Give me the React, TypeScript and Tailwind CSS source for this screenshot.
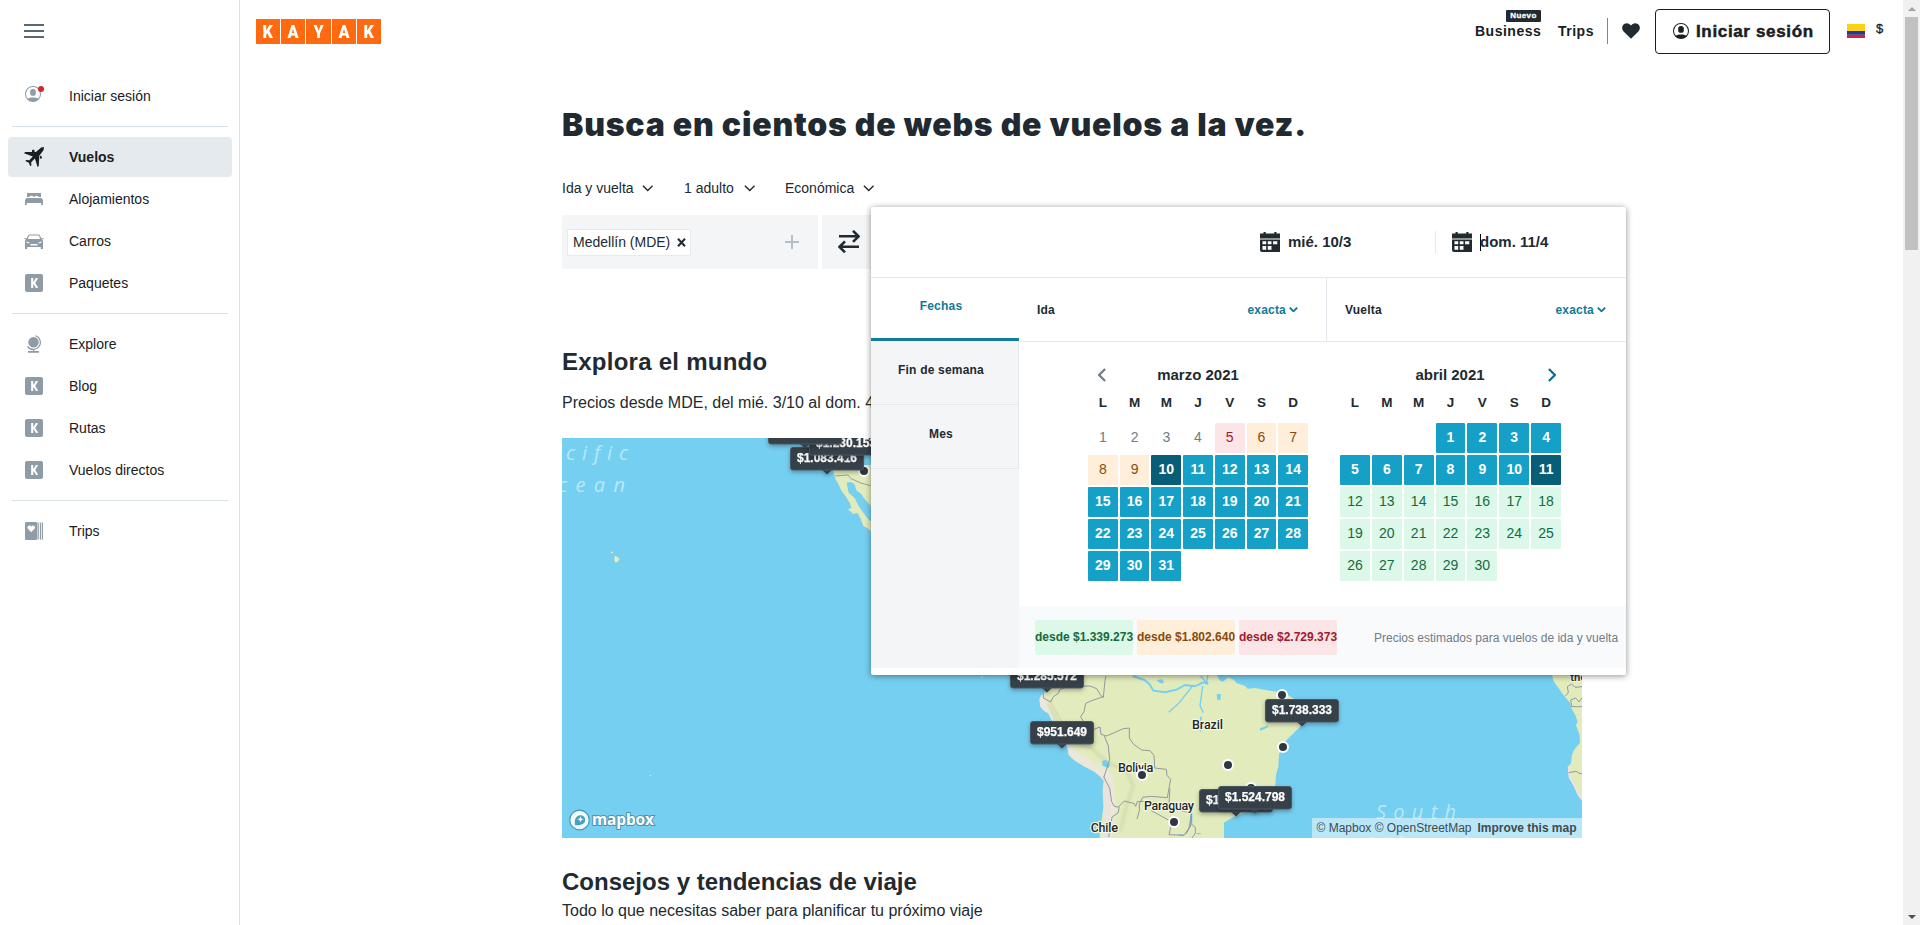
import React from "react";

type IconProps = { className?: string };

const UserIcon = ({ className }: IconProps) => (
  <svg viewBox="0 0 16 16" className={className} fill="currentColor">
    <path fillRule="evenodd" d="M8 0a8 8 0 1 1 0 16A8 8 0 0 1 8 0Zm0 1.1A6.9 6.9 0 0 0 2.9 12.6c1.2-.7 2.7-1.1 5.1-1.1s3.900.4 5.100 1.100A6.900 6.900 0 0 0 8 1.100Z" />
    <rect x="5.2" y="3" width="5.600" height="6.800" rx="2.600" />
  </svg>
);

const PlaneIcon = () => (
  <svg viewBox="0 0 20 20" className="size-5" fill="#192024">
    <path d="M20 0 17.200.5 11.900 5 1.200 4.900 0 6.200 8.800 9.500 5.300 13.300 2.300 13 1.300 14.100 4.900 15.700 6.200 19.200 7.400 18.200 7.200 15.200 10.900 11.500 13.600 20 14.800 18.900 15.300 8.700 19.500 3.200Z" />
    <path d="m8 3.300 1.500-.7 1.500 1.300-1 1.300H8ZM16.600 8.500l1.400 1.500-.6 1.700-1.500-.2v-2Z" />
  </svg>
);

const BedIcon = () => (
  <svg viewBox="0 0 18 12" className="h-3 w-[18px]" fill="#8f9ba5">
    <path d="M2 0h14v4h-2.500a2 1.200 0 0 0-4 0h-1a2 1.200 0 0 0-4 0H2ZM1.500 5h15L18 7v5h-1.700v-2H1.700v2H0V7Z" />
  </svg>
);

const CarIcon = () => (
  <svg viewBox="0 0 20 15" className="h-[15px] w-5" fill="#8f9ba5">
    <path
      fillRule="evenodd"
      d="M6 .6h8c1.200 0 2 .5 2.400 1.600l.9 2.300 2.200-.4.3 1-1.800.5c.7.6 1 1.300 1 2.200V15h-2.200v-2H3.200v2H1V7.800c0-.9.300-1.600 1-2.200L.200 5.100l.3-1 2.200.4.900-2.300C4 1.100 4.800.6 6 .6Zm.2 1c-.9 0-1.300.3-1.600 1.100L4 5h12l-.6-2.300c-.3-.8-.7-1.100-1.600-1.100ZM2.500 7.600v1.200l3 .6V8.500Zm15 0-3 .9v.9l3-.6ZM6.500 10v1.500h7V10Z"
    />
  </svg>
);

const KIcon = () => (
  <span className="flex size-[18px] items-center justify-center rounded-[2px] bg-[#8f9ba5]">
    <svg viewBox="0 0 7 10" className="h-[10px] w-[7px]" fill="none" stroke="#fff" strokeWidth="2.100">
      <path d="M1.200 0v10M6.100 0 3 5l3.300 5" />
    </svg>
  </span>
);

const GlobeIcon = () => (
  <svg viewBox="0 0 15 18" className="h-[18px] w-[15px]" fill="#8f9ba5">
    <circle cx="6.500" cy="7.300" r="5.200" />
    <path d="M8.500.8a7 7 0 1 1-8 10.500" fill="none" stroke="#8f9ba5" strokeWidth="1.200" />
    <path d="M6 14h1.200v2H12v1.700H1V16h5Z" />
  </svg>
);

const TripsIcon = () => (
  <svg viewBox="0 0 18 18" className="size-[18px]" fill="#8f9ba5">
    <rect width="12" height="18" rx="1.200" />
    <path d="M12.500.2c1.300.3 1.300.8 1.300 1.600v14.400c0 .8 0 1.300-1.300 1.600ZM14.500.2h.5c.8.200 1 .8 1 1.600v14.400c0 .8-.2 1.400-1 1.600h-.5c.4-.4.400-1 .4-1.600V1.800c0-.6 0-1.200-.4-1.600ZM16.300 0c1.200.1 1.700.6 1.700 1.500v15c0 .9-.5 1.400-1.700 1.500.5-.5.500-1 .5-1.800V1.800c0-.8 0-1.300-.5-1.800Z" />
    <path d="M6.200 10.200 2.700 6.600C1.300 4.600 4.500 2.300 6.200 4.500c1.700-2.200 4.900.1 3.500 2.100Z" fill="#fff" />
  </svg>
);

const Chevron = ({ className, w = 1.7 }: IconProps & { w?: number }) => (
  <svg viewBox="0 0 12 7" className={className} fill="none" stroke="currentColor" strokeWidth={w}>
    <path d="m.8.800 5.200 5.200L11.200.800" />
  </svg>
);

const CalendarIcon = () => (
  <svg viewBox="0 0 20 20" className="size-5 shrink-0" fill="#212a31">
    <path
      fillRule="evenodd"
      d="M3.500 0h2.200v1.500h8.600V0h2.200v1.500H20v5H0v-5h3.500ZM0 7.500h20V20H2a2 2 0 0 1-2-2ZM2.500 9.300v3h3.700v-3Zm5.300 0v3h3.700v-3Zm5.300 0v3h4.200v-3ZM2.500 14v3.800h3.700V14Zm5.300 0v3.800h3.700V14Z"
    />
  </svg>
);

const navGroups = [
  [
    { label: "Vuelos", icon: <PlaneIcon />, active: true },
    { label: "Alojamientos", icon: <BedIcon /> },
    { label: "Carros", icon: <CarIcon /> },
    { label: "Paquetes", icon: <KIcon /> },
  ],
  [
    { label: "Explore", icon: <GlobeIcon /> },
    { label: "Blog", icon: <KIcon /> },
    { label: "Rutas", icon: <KIcon /> },
    { label: "Vuelos directos", icon: <KIcon /> },
  ],
  [{ label: "Trips", icon: <TripsIcon /> }],
] as { label: string; icon: React.ReactNode; active?: boolean }[][];

const Sidebar = () => (
  <aside className="h-full w-60 shrink-0 border-r border-[#d9e2e8] text-sm text-[#192024]">
    <div className="ml-6 mt-6 flex h-[14px] w-5 flex-col justify-between">
      <span className="h-[2px] bg-[#5a6872]" />
      <span className="h-[2px] bg-[#5a6872]" />
      <span className="h-[2px] bg-[#5a6872]" />
    </div>
    <div className="mt-[38px] flex h-10 items-center pl-6">
      <span className="relative mr-6 flex w-5 pl-px">
        <UserIcon className="-mt-1 size-4 text-[#8f9ba5]" />
        <span className="absolute -top-1 right-0 size-[6px] rounded-full bg-[#d9232e]" />
      </span>
      <span className="pl-px">Iniciar sesión</span>
    </div>
    {navGroups.map((group, g) => (
      <div key={g}>
        <div className="mx-3 mb-[10px] mt-[10px] h-px w-[216px] bg-[#d9e2e8]" />
        <ul className="flex flex-col gap-[2px] px-2">
          {group.map((item) => (
            <li
              key={item.label}
              className={
                item.active
                  ? "flex h-10 w-56 items-center rounded-[4px] bg-[#e5eaee] pl-4 font-bold"
                  : "flex h-10 w-56 items-center pl-4"
              }
            >
              <span className="mr-[25px] flex w-5 justify-center">{item.icon}</span>
              {item.label}
            </li>
          ))}
        </ul>
      </div>
    ))}
  </aside>
);

const Header = () => (
  <header className="flex h-16 pl-4 text-[#192024]">
    <div className="mt-[19px] flex h-[25px] gap-px text-white">
      {["K", "A", "Y", "A", "K"].map((c, i) => (
        <span
          key={i}
          className="flex w-[24.200px] items-center justify-center bg-[#ff690f] font-['Roboto'] text-[18px] font-black leading-none"
        >
          <span className="scale-x-90">{c}</span>
        </span>
      ))}
    </div>
    <div className="ml-auto flex text-sm font-bold">
      <div className="relative w-[83px] pt-[21px] tracking-[0.500px]">
        <span className="absolute left-[31px] top-[10px] flex h-3 w-[35px] items-center justify-center rounded-[1px] bg-[#212a31] text-[8px] leading-none tracking-[0.400px] text-white [-webkit-text-stroke:0.300px_#fff]">
          Nuevo
        </span>
        Business
      </div>
      <div className="w-[49px] pt-[21px] tracking-[0.500px]">Trips</div>
      <div className="mt-[18px] h-[26px] w-px bg-[#7b8791]" />
      <svg viewBox="0 0 18 16" className="ml-[14px] mt-[23px] h-4 w-[18px]" fill="#212a31">
        <path d="M9 15.800 1.600 8.400C-.7 5.900-.1 2.300 2.200.9 4.700-.6 7.600.2 9 2.600c1.400-2.400 4.300-3.200 6.800-1.700 2.300 1.400 2.900 5 .6 7.500Z" />
      </svg>
      <button className="ml-[15px] mt-[9px] flex h-[45px] w-[175px] items-center rounded-[4px] border border-[#192024] pl-[17px] text-[17px] font-bold tracking-[0.650px]">
        <UserIcon className="-mt-px mr-[7px] size-4" />
        <span className="whitespace-nowrap pt-px [-webkit-text-stroke:0.500px_#192024]">Iniciar sesión</span>
      </button>
      <svg viewBox="0 0 18 14" className="ml-[17px] mt-6 h-[14px] w-[18px]">
        <rect width="18" height="7" fill="#fcd116" />
        <rect y="7" width="18" height="3.800" fill="#1a3a9c" />
        <rect y="10.800" width="18" height="3.200" fill="#d3203a" />
      </svg>
      <div className="ml-[11px] w-[27px] pt-5 text-[13px] font-normal [-webkit-text-stroke:0.300px_#192024]">$</div>
    </div>
  </header>
);

const Select = ({ label, className }: { label: string; className: string }) => (
  <div className={className}>
    {label}
    <Chevron className="mt-px h-[6.500px] w-[11.500px]" w={1.6} />
  </div>
);

const SearchBar = () => (
  <div className="mt-[17px] flex h-[54px] gap-1 text-sm text-[#212a31]">
    <div className="flex w-64 items-center justify-between rounded-[1px] bg-[#f3f5f7] pl-[5px] pr-[19px]">
      <div className="flex h-[27px] w-[124px] items-center justify-between rounded-[2px] border border-[#e5eaee] bg-white pl-[5px] pr-1">
        Medellín (MDE)
        <svg viewBox="0 0 9 9" className="size-[9px]" stroke="#212a31" strokeWidth="2">
          <path d="m1 .8 7 7.400M8 .800 1 8.200" />
        </svg>
      </div>
      <svg viewBox="0 0 14 14" className="size-[14px]" stroke="#b5bfc8" strokeWidth="2">
        <path d="M7 0v14M0 7h14" />
      </svg>
    </div>
    <div className="w-64 bg-[#f3f5f7] pl-4 pt-[15px]">
      <svg viewBox="0 0 22 23" className="h-[23px] w-[22px]" fill="none" stroke="#212a31" strokeWidth="2.600">
        <path d="M1 6.300h19M15 .8 20.500 6.300l-5.500 5.500M21 16.800H2M7 11.300 1.500 16.800l5.500 5.500" />
      </svg>
    </div>
  </div>
);

const Pill = ({ x, y, w = 74, label }: { x: number; y: number; w?: number; label: string }) => (
  <g transform={`translate(${x} ${y})`} filter="url(#pill-shadow)">
    <path d={`M${w / 2 - 5} 23h10l-5 4.500Z`} fill="#363f48" />
    <rect x="0.500" y="0.500" width={w - 1} height="22.500" rx="2.500" fill="#363f48" stroke="#4b5762" />
    <text x={w / 2} y="15" textAnchor="middle" fontSize="12" fontWeight="700" fill="#fff" stroke="#fff" strokeWidth="0.250">
      {label}
    </text>
  </g>
);

const airports = [
  [720, 257],
  [721, 309],
  [666, 327],
  [689, 350],
  [580, 337],
  [612, 384],
  [302, 33],
];

const WorldMap = () => (
  <svg viewBox="0 0 1020 400" className="mt-[25px] block h-[400px] w-[1020px] bg-[#75cff0]" fontFamily="'Liberation Sans', sans-serif">
    <defs>
      <filter id="pill-shadow" x="-20%" y="-30%" width="140%" height="180%">
        <feDropShadow dx="0" dy="2" stdDeviation="2" floodColor="#000" floodOpacity="0.3" />
      </filter>
      <filter id="soft">
        <feGaussianBlur stdDeviation="5" />
      </filter>
      <clipPath id="south-america">
        <path d="M245 20 205 90 185 105 178 118 181 140 192 152 205 160 215 180 228 190 240 215 252 240 262 262 266 285 282 300 310 318 345 336 362 352 371 362 368 390 370 440 362 500 358 540H732V488L758 472 800 455 850 430 885 390 888 345 895 320 897 285 905 262 920 240 945 215 966 195 969 160 960 130 915 98 862 91 825 84 803 86 796 78 770 70 762 60 745 52 728 66 718 60 700 20Z" />
      </clipPath>
    </defs>

    <g transform="translate(-22 -108) scale(0.33333)">
      <path d="M872 405 880 425 886 446 895 462 905 484 918 500 930 520 934 534 924 538 940 552 952 548 962 566 970 588 982 594 995 606V405Z" fill="#e2ebbb" />
      <path d="M920 458 932 456 943 462 950 482 964 492 972 505 985 520 995 530V577L980 562 968 545 956 528 944 504 926 488Z" fill="#75cff0" />
      <path d="m886 438 38-3 8 10 30 14 30 8" fill="none" stroke="#8b8fa0" strokeWidth="2.500" />
      <path d="m224 678 8 2 7 8-5 6-7 5-4-8ZM212 665h7v4h-7Z" fill="#e7ebb9" />
    </g>
    <rect x="88" y="337" width="1" height="1" fill="#f0f5e0" />

    <g transform="translate(418 222) scale(0.33333)">
      <g clipPath="url(#south-america)">
        <rect x="150" y="0" width="850" height="560" fill="#e2ebbb" />
        <path d="m175 100 55 105 50 80 105 65 10 80-15 120" fill="none" stroke="#ebe8dc" strokeWidth="26" filter="url(#soft)" />
        <path d="m375 370 15 50-5 140" fill="none" stroke="#ece2dc" strokeWidth="40" filter="url(#soft)" />
        <path d="m205 130 30 60 40 55 60 20 45 40 60 30 20 40-20 60-20 80" fill="none" stroke="#d2dab0" strokeWidth="9" filter="url(#soft)" />
        <path d="m210 120 35 65 38 60 55 22" fill="none" stroke="#d3dab0" strokeWidth="4" />
      </g>
      <g fill="none" stroke="#75cff0" strokeWidth="6">
        <path d="m458 48 35 12 15 12 12 20 35 5 35-8 25-14 30 4 25-12 15 2" />
        <path d="M640 75 620 100 598 128 566 157M668 78l-8 60 10 20M662 48l22 25M684 44l-6 30" strokeWidth="4" />
      </g>
      <path d="m530 60 18-2 4 12-12 0ZM710 102h12v17h-10ZM840 205l14-5 10-5v6l-12 7-12 4ZM660 170h5v18h-5ZM660 205h4v10h-4ZM366 303l12-4 12 14-4 12-18-8ZM630 460h7v30h-7ZM596 523h14v5h-14ZM650 519h12v4h-12Z" fill="#75cff0" />
      <g fill="none" stroke="#8d90a2" strokeWidth="2.800">
        <path d="M190 100v14l22 12 8-16 15-10 5-12 25-8 65-2 20 8 12 20 8 6 5-50 3-14M370 110l-35 12-18 8-5 25-10 15 10 18 30 20 18-7 3 22 17 5 50-22 18-2v30l12 18 25 18 25 2 12 14 2 38 35 4 2 18 11 12-4 20-6 35-50-4-24 3-10 20v20l-7 25M373 228l12 30 4 40-8 25-9 28M371 350l18 35 6 40 8 14 12 2 18-18 30 8 4 8 5-14 25-1M418 441l-4 18-18 12-4 30-6 30M570 385l-3 45 30 20 38 10-8 44-15 22-45-2 5-22-3-20-55-30M635 468l-3 30-14 24M632 490l14 12v18l-10 14" />
      </g>
      <g fontFamily="Roboto, sans-serif" fontSize="38" fontWeight="500" fill="#23262a" stroke="#f3f6e2" strokeWidth="7" paintOrder="stroke" strokeLinejoin="round">
        <text x="636" y="206" textLength="93">Brazil</text>
        <text x="414" y="335" textLength="106">Bolivia</text>
        <text x="492" y="449" textLength="150">Paraguay</text>
        <text x="332" y="516" textLength="82">Chile</text>
      </g>
      <path d="m4 54 4-5" stroke="#e7ebb9" strokeWidth="3" />
    </g>

    <g transform="translate(718 222) scale(0.33333)">
      <path d="M815 40 820 62 838 88 850 105 870 128 874 145 886 166 893 185 888 196 899 225 900 248 882 270 876 285 873 310 865 318 867 352 882 375 890 400 910 426V40Z" fill="#e2ebbb" />
      <path d="m866 320 3 32 14 24 14 30 10 14" fill="none" stroke="#efe3df" strokeWidth="6" />
      <path d="M856 108 865 98 862 80 875 72 885 82 908 80M872 140h36M875 138l-3-18 15-6 10 12 11-15M866 338l22-4 12 7h8" fill="none" stroke="#8d90a2" strokeWidth="2.800" />
      <text x="871" y="62" fontFamily="Roboto, sans-serif" fontSize="34" fontWeight="500" fill="#23262a" stroke="#f3f6e2" strokeWidth="6" paintOrder="stroke">the</text>
    </g>

    <g
      fontFamily="'Open Sans', sans-serif"
      fontStyle="italic"
      fontSize="20"
      fill="#fff"
      fillOpacity="0.5"
      className="[font-variant-ligatures:none]"
    >
      <text x="4" y="22" letterSpacing="6.900">cific</text>
      <text x="-4" y="54" textLength="67">cean</text>
      <text x="814" y="381" textLength="80">South</text>
      <text x="802" y="413" textLength="120">Atlantic</text>
      <text x="70" y="415" textLength="76">South</text>
    </g>

    <g fill="#2f3841" stroke="#fff" strokeWidth="2">
      {airports.map(([x, y]) => (
        <circle key={`${x}-${y}`} cx={x} cy={y} r="5" />
      ))}
    </g>

    <Pill x={228} y={9} label="$1.083.416" />
    <Pill x={247} y={-6} label="$1.230.153" />
    <Pill x={206} y={-17} label="$1.305.220" />
    <Pill x={448} y={227} label="$1.285.572" />
    <Pill x={468} y={283} w={64} label="$951.649" />
    <Pill x={703} y={261} label="$1.738.333" />
    <Pill x={637} y={351} label="$1.492.310" />
    <Pill x={656} y={348} label="$1.524.798" />

    <g transform="translate(6 370)">
      <circle cx="11.500" cy="12" r="9.800" fill="#eefaff" stroke="#4b93ad" strokeWidth="1.200" />
      <path d="M7 17c-.7-5 .3-9.500 5.500-9.800 4.800 0 6.300 5.500 3 8.300C13.300 17.300 10 17.400 7 17Z" fill="#4b9fc0" />
      <path d="m12.500 8.300.9 2.100 2.100.9-2.100.9-.9 2.100-.9-2.100-2.100-.9 2.100-.9Z" fill="#fff" />
      <text x="24" y="16.500" fontFamily="'Open Sans', sans-serif" fontSize="15.500" fontWeight="700" fill="#fff" stroke="#4b93ad" strokeWidth="2" paintOrder="stroke" textLength="62">mapbox</text>
    </g>

    <rect x="750" y="380" width="270" height="20" fill="#fff" fillOpacity="0.5" />
    <text x="754.500" y="394" fontSize="12" fill="#404b50" textLength="155">© Mapbox © OpenStreetMap</text>
    <text x="915.500" y="394" fontSize="12" fontWeight="700" fill="#404b50" textLength="99">Improve this map</text>
  </svg>
);

type Tone = "past" | "high" | "mid" | "low" | "range" | "edge";

const toneClass: Record<Tone, string> = {
  past: "text-[#6f7d88] pb-[3px]",
  high: "bg-[#fce5e7] text-[#9c1c2e]",
  mid: "bg-[#ffeeda] text-[#8a4a0c]",
  low: "bg-[#dcf8e9] text-[#146b3c]",
  range: "bg-[#15a0c8] text-white font-bold",
  edge: "bg-[#095e77] text-white font-bold",
};

const marchTone = (d: number): Tone =>
  d < 5 ? "past" : d === 5 ? "high" : d < 10 ? "mid" : d === 10 ? "edge" : "range";
const aprilTone = (d: number): Tone => (d < 11 ? "range" : d === 11 ? "edge" : "low");

const Month = ({ days, offset, tone, className }: { days: number; offset: number; tone: (d: number) => Tone; className: string }) => (
  <div className={className}>
    <div className="grid h-5 grid-cols-7 gap-[2px] text-center text-[13.500px] font-bold leading-5">
      {["L", "M", "M", "J", "V", "S", "D"].map((d, i) => (
        <span key={i}>{d}</span>
      ))}
    </div>
    <div className="mt-[10px] grid auto-rows-[30px] grid-cols-7 gap-[2px] text-sm">
      {Array.from({ length: offset }, (_, i) => (
        <span key={`e${i}`} />
      ))}
      {Array.from({ length: days }, (_, i) => (
        <span key={i} className={`flex items-center justify-center rounded-[1px] pb-[2px] ${toneClass[tone(i + 1)]}`}>
          {i + 1}
        </span>
      ))}
    </div>
  </div>
);

const Flex = ({ label, className }: { label: string; className: string }) => (
  <div className={className}>
    <span className="text-[#212a31]">{label}</span>
    <span className="flex items-center gap-[3px] text-[#117a98]">
      exacta
      <Chevron className="h-[5px] w-[9px]" w={2.6} />
    </span>
  </div>
);

const DatePopup = () => (
  <div className="absolute left-[871px] top-[207px] flex h-[468px] w-[755px] flex-col rounded-[2px] bg-white text-[#212a31] shadow-[0_1px_6px_rgba(0,0,0,0.45)]">
    <div className="flex h-[71px] border-b border-[#e5e8ee] pl-[389px] text-[15px] font-bold">
      <div className="mt-6 flex h-[22px] w-[176px] items-center border-r border-[#e5e8ee]">
        <CalendarIcon />
        <span className="ml-2">mié. 10/3</span>
      </div>
      <div className="mt-6 flex h-[22px] items-center pl-4">
        <CalendarIcon />
        <span className="ml-2 h-[17px] w-px bg-black" />
        <span className="-ml-px">dom. 11/4</span>
      </div>
    </div>
    <div className="flex h-[390px]">
      <div className="flex w-[148px] flex-col bg-[#f3f5f7] text-center text-xs font-bold tracking-[0.2px]">
        <div className="h-[63px] border-b-[3px] border-[#0f7d9c] bg-white pl-0 pr-2 pt-5 text-[#117a98]">Fechas</div>
        <div className="flex h-16 items-center justify-center border-b border-r border-[#e5e8ee] pb-[9px] pr-[7px] pt-1">Fin de semana</div>
        <div className="flex h-16 items-center justify-center border-b border-r border-[#e5e8ee] pb-[9px] pr-[7px] pt-1">Mes</div>
      </div>
      <div className="flex flex-1 flex-col">
        <div className="flex h-16 border-b border-[#e5e8ee] text-xs font-bold tracking-[0.2px]">
          <Flex label="Ida" className="flex w-[308px] items-center justify-between border-r border-[#e5e8ee] pl-[18px] pr-[28px]" />
          <Flex label="Vuelta" className="flex flex-1 items-center justify-between pl-[18px] pr-5" />
        </div>
        <div className="flex h-[264px] flex-col pl-[69px] pr-[65px]">
          <div className="mt-[23px] flex h-5 items-center text-[15px] font-bold">
            <span className="flex w-7 justify-center text-[#6f7d88]">
              <Chevron className="h-[8px] w-[14px] rotate-90" w={2} />
            </span>
            <span className="ml-[2px] w-[160px] text-center">marzo 2021</span>
            <span className="ml-[92px] w-[160px] text-center">abril 2021</span>
            <span className="ml-auto flex w-[18px] justify-center text-[#0f6f8c]">
              <Chevron className="h-[8px] w-[14px] -rotate-90" w={2} />
            </span>
          </div>
          <div className="mt-2 flex gap-8">
            <Month days={31} offset={0} tone={marchTone} className="w-[220px]" />
            <Month days={30} offset={3} tone={aprilTone} className="w-[221px]" />
          </div>
        </div>
        <div className="flex h-[62px] items-center bg-[#f9fafc] pl-4 text-xs">
          <div className="flex gap-1 text-center font-bold leading-[35px]">
            <span className="h-[35px] w-[98px] whitespace-nowrap rounded-[2px] bg-[#dcf8e9] text-[#146b3c]">desde $1.339.273</span>
            <span className="h-[35px] w-[98px] whitespace-nowrap rounded-[2px] bg-[#ffeeda] text-[#8a4a0c]">desde $1.802.640</span>
            <span className="h-[35px] w-[98px] whitespace-nowrap rounded-[2px] bg-[#fce5e7] text-[#9c1c2e]">desde $2.729.373</span>
          </div>
          <span className="ml-[37px] whitespace-nowrap pt-px text-[#6f7d88]">Precios estimados para vuelos de ida y vuelta</span>
        </div>
      </div>
    </div>
  </div>
);

const Scrollbar = () => (
  <div className="flex h-full w-[17px] shrink-0 flex-col items-center bg-[#f1f1f1]">
    <svg viewBox="0 0 8 4" className="mt-[7px] h-1 w-2" fill="#a3a3a3">
      <path d="M0 4 4 0l4 4Z" />
    </svg>
    <div className="mt-[6px] h-[233px] w-[13px] bg-[#c1c1c1]" />
    <svg viewBox="0 0 8 4" className="mb-[6px] mt-auto h-1 w-2" fill="#505050">
      <path d="m0 0 4 4 4-4Z" />
    </svg>
  </div>
);

export default function App() {
  return (
    <div className="relative flex h-[925px] w-full overflow-hidden bg-white font-['Liberation_Sans',Arial,sans-serif]">
      <Sidebar />
      <main className="min-w-0 flex-1">
        <Header />
        <div className="ml-[322px] w-[1020px] text-[#212a31]">
          <h1 className="mt-[41px] flex h-10 items-center whitespace-nowrap font-['Inter'] text-[32px] font-black tracking-[0.800px]">
            Busca en cientos de webs de vuelos a la vez.
          </h1>
          <div className="mt-[33px] flex h-5 text-sm">
            <Select label="Ida y vuelta" className="mr-[31px] flex w-[91px] items-center justify-between" />
            <Select label="1 adulto" className="mr-[30px] flex w-[71px] items-center justify-between" />
            <Select label="Económica" className="flex w-[89px] items-center justify-between" />
          </div>
          <SearchBar />
          <h2 className="mt-[77px] h-8 text-2xl font-bold leading-8 tracking-[0.250px]">Explora el mundo</h2>
          <p className="mt-[15px] h-5 text-base leading-5">Precios desde MDE, del mié. 3/10 al dom. 4/11</p>
          <WorldMap />
          <h2 className="mt-[29px] h-[30px] text-2xl font-bold leading-[30px]">Consejos y tendencias de viaje</h2>
          <p className="mt-1 h-5 text-base leading-5">Todo lo que necesitas saber para planificar tu próximo viaje</p>
        </div>
      </main>
      <Scrollbar />
      <DatePopup />
    </div>
  );
}
